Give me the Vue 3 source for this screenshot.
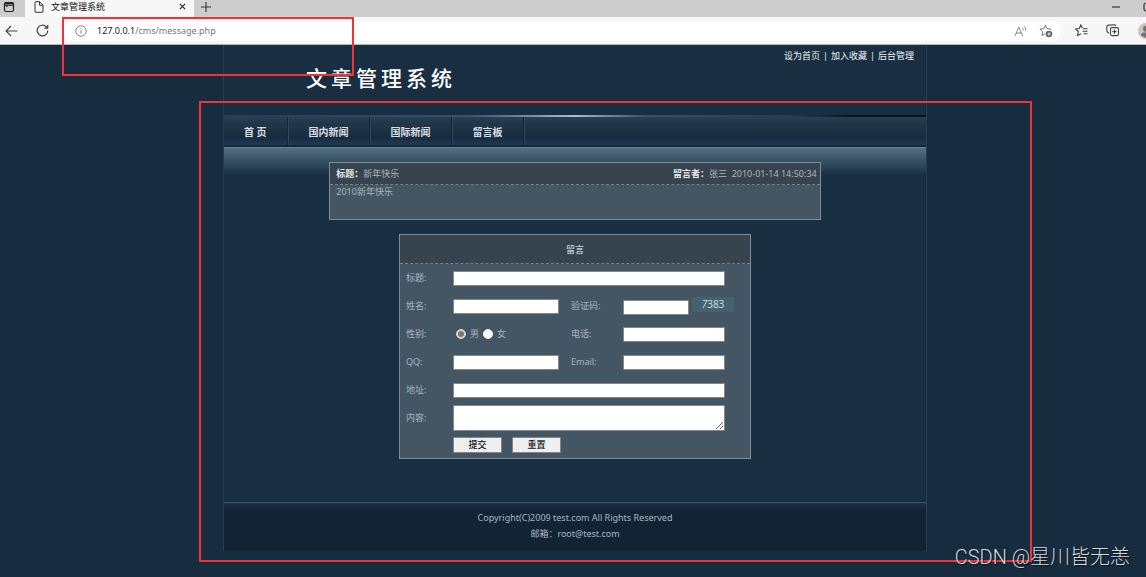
<script setup>
import { ref } from 'vue'

const siteName = '文章管理系统'
const topLinks = ['设为首页', '加入收藏', '后台管理']
const navItems = ['首 页', '国内新闻', '国际新闻', '留言板']
const gender = ref('m')
</script>

<template>
  <div class="window">
    <header class="chrome">
      <div class="tabs">
        <button class="workspace" aria-label="标签页操作">
          <svg width="12" height="12" viewBox="0 0 12 12" fill="none" stroke="#222" stroke-width="1.2">
            <rect x="1.5" y="1.5" width="9" height="9" rx="1.5" />
            <path d="M1.5 2.5h9M1.5 4.2h9M4 4v2" />
          </svg>
        </button>
        <div class="tab">
          <svg width="10" height="12" viewBox="0 0 10 12" fill="none" stroke="#333" stroke-width="1">
            <path d="M1 1.5Q1 .7 1.8.7H5.5L9 4.2v6.3q0 .8-.8.8H1.8q-.8 0-.8-.8zM5.5.7v3.5H9" />
          </svg>
          <span class="tab-title">{{ siteName }}</span>
          <button aria-label="关闭">
            <svg width="7" height="7" viewBox="0 0 8 8" stroke="#222" stroke-width="1.2"><path d="M1 1l6 6M7 1L1 7" /></svg>
          </button>
        </div>
        <button class="new-tab" aria-label="新建标签页">
          <svg width="12" height="12" viewBox="0 0 12 12" stroke="#333" stroke-width="1.1"><path d="M1 6h10M6 1v10" /></svg>
        </button>
        <div class="window-buttons">
          <svg width="8" height="8" viewBox="0 0 8 8" stroke="#333" stroke-width="1.2"><path d="M0 4h8" /></svg>
          <svg width="10" height="10" viewBox="0 0 10 10" fill="none" stroke="#333" stroke-width="1.2"><rect x="1" y="1" width="8" height="8" rx="2" /></svg>
        </div>
      </div>
      <div class="toolbar">
        <button aria-label="返回">
          <svg width="13" height="12" viewBox="0 0 13 12" fill="none" stroke="#444" stroke-width="1.1"><path d="M12.5 6H1M6 1L1 6l5 5" /></svg>
        </button>
        <button class="reload" aria-label="刷新">
          <svg width="13" height="13" viewBox="0 0 13 13" fill="none" stroke="#444" stroke-width="1.2"><path d="M11.8 6.5A5.3 5.3 0 1 1 10.2 2.7L11.5 4M11.7 1v3.2H8.4" /></svg>
        </button>
        <div class="address">
          <svg width="12" height="12" viewBox="0 0 12 12" fill="none" stroke="#777" stroke-width=".9"><circle cx="6" cy="6" r="5.2" /><path d="M6 5.3v3.4M6 3.2v1" /></svg>
          <span class="url"><span class="host">127.0.0.1</span>/cms/message.php</span>
          <svg width="13" height="12" viewBox="0 0 13 12" fill="none" stroke="#888" stroke-width="1"><path d="M1 11L4.8 2l3.8 9M2.3 8h5M8.2 2.6q1.2 1 .9 2.6M10 1.2q2 1.6 1.6 4.4" /></svg>
          <svg class="favorite" width="14" height="14" viewBox="0 0 14 14"><path d="M11.2 6L12 5.1 8 4.6 6.4 1.2 4.8 4.6.9 5.1l2.8 2.6L3 11.5l3-1.7" fill="none" stroke="#777" /><circle cx="10" cy="10" r="3.3" fill="#666" /><path d="M8.4 10h3.2M10 8.4v3.2" stroke="#fff" stroke-width=".8" /></svg>
        </div>
        <button class="favorites" aria-label="收藏夹">
          <svg width="13" height="13" viewBox="0 0 13 13" fill="none" stroke="#444" stroke-width="1.1"><path d="M7.5 4.2L5.8 1 4.2 4.5.7 5l2.6 2.5-.7 4L6 9.7M8 4.7h4.5M7.5 7.2h5M8.5 9.7h4" /></svg>
        </button>
        <button class="collections" aria-label="集锦">
          <svg width="14" height="13" viewBox="0 0 14 13" fill="none" stroke="#444" stroke-width="1.1"><rect x="4.5" y="3.6" width="8" height="8" rx="1.5" /><path d="M8.5 5.5v4.2M6.4 7.6h4.2M3 9.2L1.5 8Q.8 7.5.8 6.4V3q0-1.7 1.8-1.9L8 .8q1.3 0 2 1.2" /></svg>
        </button>
        <svg class="avatar" width="16" height="16" viewBox="0 0 16 16"><circle cx="8" cy="8" r="8" fill="#c8c5c2" /><circle cx="8" cy="5.8" r="3" fill="#777370" /><path d="M3 12.5Q3 9.5 6 9.5h4q3 0 3 3L8 15z" fill="#777370" /></svg>
      </div>
    </header>

    <div class="page">
      <div class="site">
        <header class="banner">
          <div class="top-links">
            <template v-for="(link, i) in topLinks" :key="link">
              <span v-if="i">|</span>
              <a href="#">{{ link }}</a>
            </template>
          </div>
          <h1><span v-for="char in siteName" :key="char">{{ char }}</span></h1>
        </header>

        <nav class="menu">
          <a v-for="item in navItems" :key="item" href="#">{{ item }}</a>
        </nav>

        <main>
          <article class="message">
            <header>
              <span><b>标题：</b>新年快乐</span>
              <span><b>留言者：</b>张三&nbsp; 2010-01-14 14:50:34</span>
            </header>
            <p>2010新年快乐</p>
          </article>

          <form class="entry" @submit.prevent>
            <h2>留言</h2>
            <div class="fields">
              <label for="title">标题:</label>
              <input id="title" class="wide" type="text" />

              <label for="name">姓名:</label>
              <input id="name" class="short" type="text" />
              <label for="code">验证码:</label>
              <div class="captcha">
                <input id="code" type="text" />
                <span class="code"><i>7</i>383</span>
              </div>

              <span>性别:</span>
              <div class="gender">
                <input id="male" v-model="gender" type="radio" name="gender" value="m" />
                <label for="male">男</label>
                <input id="female" v-model="gender" type="radio" name="gender" value="f" />
                <label for="female">女</label>
              </div>
              <label for="phone">电话:</label>
              <input id="phone" type="text" />

              <label for="qq">QQ:</label>
              <input id="qq" class="short" type="text" />
              <label for="email">Email:</label>
              <input id="email" type="text" />

              <label for="address">地址:</label>
              <input id="address" class="wide" type="text" />

              <label for="content">内容:</label>
              <textarea id="content" class="wide"></textarea>

              <div class="actions">
                <button type="submit">提交</button>
                <button type="reset">重置</button>
              </div>
            </div>
          </form>
        </main>

        <footer>
          <p>Copyright(C)2009 test.com All Rights Reserved</p>
          <p>邮箱：root@test.com</p>
        </footer>
      </div>
    </div>

    <div class="mark mark-url"></div>
    <div class="mark mark-site"></div>
    <div class="watermark">CSDN @星川皆无恙</div>
  </div>
</template>

<style>
body {
  background: #182c40;
}
</style>

<style scoped>
* {
  box-sizing: border-box;
}

.window {
  position: relative;
  display: flex;
  flex-direction: column;
  min-height: 100vh;
  overflow: hidden;
  background: #182c40;
  font-family: "Noto Sans", "Noto Sans CJK SC", sans-serif;
  font-size: 9px;
  line-height: 16px;
  color: #a9b5c1;
}

h1,
h2,
p {
  margin: 0;
}

a {
  color: inherit;
  text-decoration: none;
}

svg {
  display: block;
  flex: none;
}

.chrome {
  border-bottom: 1px solid #b5b5b5;
  background: #f7f7f7;
}

.chrome button {
  display: flex;
  padding: 0;
  border: 0;
  background: none;
}

.tabs {
  display: flex;
  align-items: center;
  height: 17px;
  padding: 0 0 4px 3px;
  background: #cdcdcd;
}

.workspace {
  width: 22px;
}

.tab {
  display: flex;
  align-items: center;
  width: 169px;
  height: 17px;
  margin-bottom: -4px;
  padding: 0 8px 4px 9px;
  background: #f7f7f7;
  color: #111;
}

.tab-title {
  flex: 1;
  padding-left: 7px;
}

.new-tab {
  margin-left: 6px;
}

.window-buttons {
  display: flex;
  align-items: center;
  gap: 23px;
  margin-left: auto;
  margin-right: -7px;
}

.toolbar {
  display: flex;
  align-items: center;
  height: 27px;
  padding-left: 5px;
}

.reload {
  margin-left: 18px;
}

.address {
  display: flex;
  flex: 1;
  align-items: center;
  height: 20px;
  margin-left: 14px;
  padding: 0 8px 0 12px;
  border-radius: 10px;
  background: #fff;
}

.url {
  flex: 1;
  padding-left: 10px;
  color: #777;
}

.host {
  color: #222;
}

.favorite {
  margin-left: 12px;
}

.favorites {
  margin-left: 14px;
}

.collections {
  margin-left: 18px;
}

.avatar {
  margin-left: 18px;
  margin-right: -8px;
}

.page {
  padding-left: 4px;
}

.site {
  max-width: 704px;
  margin: 0 auto;
  border: solid #293e50;
  border-width: 0 1px;
  background: #1a2e42;
}

.banner {
  height: 70px;
  padding: 3px 12px 0 82px;
}

.top-links {
  display: flex;
  justify-content: flex-end;
  gap: 3px;
  color: #eef2f5;
}

h1 {
  display: flex;
  gap: 4px;
  font-family: KaiTi, STKaiti, "Noto Sans CJK SC", sans-serif;
  font-size: 21px;
  font-weight: 500;
  line-height: 26px;
  color: #fff;
}

.menu {
  display: flex;
  height: 32px;
  padding-top: 2px;
  border-bottom: 2px solid #152638;
  background:
    linear-gradient(90deg, #263e52, #395167 35%, #a9bccb 50%, #395167 60%, #263e52 80%, #0b1119 90%) top / 100% 2px no-repeat,
    linear-gradient(#29415a, #22384a 25%, #182b3e 75%, #213a52);
  font-size: 10px;
  font-weight: 700;
  line-height: 30px;
  color: #d8dee4;
}

.menu a {
  padding: 0 21px 0 20px;
  border-right: 1px solid #30475b;
  box-shadow: inset -1px 0 #142536;
}

main {
  padding: 14px 0 43px;
  border-top: 1px solid #5f8494;
  background: linear-gradient(#547080, #2b4458 18px, #1a2e42 28px);
}

.message {
  width: 70%;
  min-height: 58px;
  margin: 0 auto 14px;
  border: 1px solid #7e8e99;
  background: #445664;
}

.message header {
  display: flex;
  justify-content: space-between;
  padding: 3px 3px 2px 6px;
  border-bottom: 1px dashed #738390;
  background: #36444f;
}

.message b {
  color: #e6eaee;
}

.message p {
  padding: 0 6px;
  line-height: 14px;
}

.entry {
  width: calc(50% + 1px);
  margin: 0 auto;
  border: 1px solid #7e8e99;
  background: #445664;
}

h2 {
  padding: 7px 6px 5px;
  border-bottom: 1px dashed #738390;
  background: #36444f;
  font-size: 9px;
  font-weight: 500;
  line-height: 16px;
  text-align: center;
  color: #c5ced6;
}

.fields {
  display: grid;
  grid-template-columns: 47px 118px 52px 1fr;
  grid-template-rows: repeat(5, 28px) 27px 27px;
  align-items: center;
  padding-left: 6px;
}

input[type="text"],
textarea {
  width: 102px;
  height: 15px;
  margin: 0;
  padding: 1px 2px;
  border: 1px solid #84888b;
  border-radius: 1px;
  background: #fff;
  font: inherit;
  color: #222;
}

.fields .short {
  width: 106px;
}

.fields .wide {
  grid-column: 2 / -1;
  width: 272px;
}

.fields textarea {
  height: 26px;
}

.captcha {
  display: flex;
  gap: 3px;
}

.captcha input[type="text"] {
  width: 66px;
  margin-top: 3px;
}

.code {
  width: 42px;
  height: 15px;
  background: #466270;
  font-size: 10px;
  line-height: 15px;
  text-align: center;
  color: #d0d8dd;
}

.gender {
  display: flex;
  align-items: center;
  gap: 4px;
  padding-left: 3px;
}

.gender input {
  appearance: none;
  width: 10px;
  height: 10px;
  margin: 0;
  border: 1px solid #fff;
  border-radius: 50%;
  background: #fff;
}

.gender input:checked {
  border-color: #ddd;
  background: #777;
  box-shadow: inset 0 0 0 1px #ddd;
}

.actions {
  display: flex;
  grid-column: 2 / -1;
  gap: 10px;
}

.actions button {
  width: 49px;
  height: 16px;
  padding: 0;
  border: 1px solid #858585;
  border-radius: 1px;
  background: #efefef;
  font: inherit;
  font-weight: 500;
  line-height: 14px;
  color: #111;
}

footer {
  padding: 7px 0 9px;
  border-top: 1px solid #3b5462;
  background: linear-gradient(#1b3048, #122433 8px);
  text-align: center;
}

.mark {
  position: absolute;
  border: 2px solid #f03338;
  pointer-events: none;
}

.mark-url {
  top: 17px;
  left: 62px;
  width: 292px;
  height: 59px;
}

.mark-site {
  top: 101px;
  right: 114px;
  bottom: 15px;
  left: 199px;
}

.watermark {
  position: absolute;
  right: 16px;
  bottom: 6px;
  font-family: Roboto, "Noto Sans CJK SC", sans-serif;
  font-size: 20px;
  font-weight: 300;
  line-height: 28px;
  color: #d4d9dd;
  text-shadow: 1px 1px 1px #0009;
}
</style>
